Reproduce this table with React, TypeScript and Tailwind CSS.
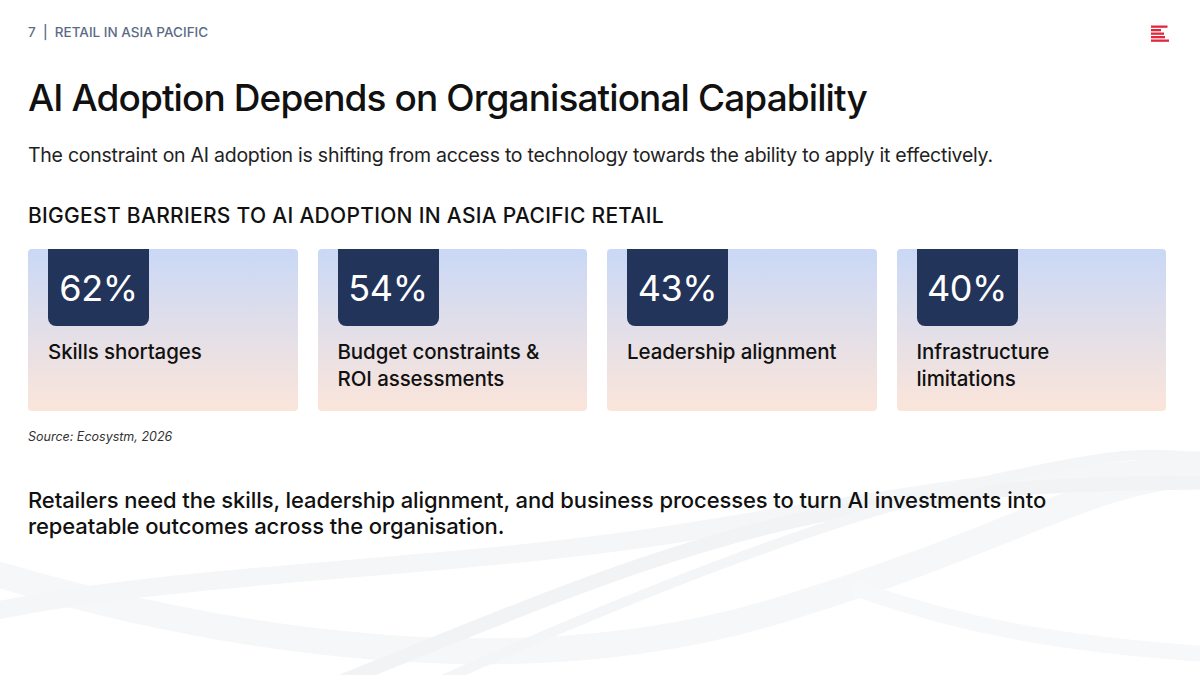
import React from "react";

const barriers = [
  { pct: "62%", label: ["Skills shortages"] },
  { pct: "54%", label: ["Budget constraints &", "ROI assessments"] },
  { pct: "43%", label: ["Leadership alignment"] },
  { pct: "40%", label: ["Infrastructure", "limitations"] },
];

const Logo = () => (
  <svg width="18" height="18" viewBox="0 0 18 18">
    <rect x="0" y="0.5" width="16.5" height="2.3" fill="#e0283c" />
    <rect x="0" y="4" width="10" height="2.3" fill="#e0283c" />
    <rect x="0" y="7.5" width="13" height="2.3" fill="#e0283c" />
    <rect x="0" y="11" width="14" height="2.3" fill="#e0283c" />
    <rect x="0" y="14.5" width="18" height="2.3" fill="#e0283c" />
  </svg>
);

// faint swooshes in the lower part of the slide
const Waves = () => (
  <svg
    className="absolute inset-0 pointer-events-none"
    width="1200"
    height="675"
    viewBox="0 0 1200 675"
  >
    <g fill="none" strokeLinecap="round">
      <path d="M0 575 C 220 640, 520 690, 780 610 S 1080 480, 1220 470" stroke="#f6f7f8" strokeWidth="26" />
      <path d="M0 610 C 200 570, 460 570, 700 530 S 1000 480, 1220 462" stroke="#f5f6f7" strokeWidth="18" />
      <path d="M320 690 C 520 610, 700 530, 880 505 S 1100 485, 1220 482" stroke="#f2f3f4" strokeWidth="14" />
      <path d="M420 690 C 620 600, 830 515, 1000 478 S 1150 460, 1220 456" stroke="#f4f5f6" strokeWidth="10" />
      <path d="M860 590 C 960 625, 1060 645, 1220 655" stroke="#f7f8f9" strokeWidth="16" />
    </g>
  </svg>
);

export default function App() {
  return (
    <div
      className="relative w-[1200px] h-[675px] overflow-hidden bg-white text-[#111]"
      style={{ fontFamily: "Inter, 'Liberation Sans', sans-serif" }}
    >
      <Waves />
      <div className="relative flex flex-col px-[28px] pt-[24px]">
        <div className="flex items-start justify-between">
          <div className="text-[13.5px] font-medium text-[#5b6b86] leading-[16px]">
            7 &nbsp;|&nbsp; RETAIL IN ASIA PACIFIC
          </div>
          <div className="mr-[3px] mt-[1px]">
            <Logo />
          </div>
        </div>

        <h1 className="mt-[33px] text-[37px] leading-[44px] font-medium tracking-[-0.9px] text-[#111]">
          AI Adoption Depends on Organisational Capability
        </h1>

        <p className="mt-[22px] text-[19.5px] leading-[26px] tracking-[-0.25px] text-[#222]">
          The constraint on AI adoption is shifting from access to technology towards the ability to apply it effectively.
        </p>

        <h2 className="mt-[35px] text-[21px] leading-[26px] font-medium tracking-[0.3px] text-[#111]">
          BIGGEST BARRIERS TO AI ADOPTION IN ASIA PACIFIC RETAIL
        </h2>

        <div className="mt-[20px] grid grid-cols-4 gap-x-[20px] w-[1138px]">
          {barriers.map((b) => (
            <div
              key={b.pct}
              className="h-[162px] rounded-[4px] bg-gradient-to-b from-[#c9d8f6] to-[#fbe5da] px-[20px]"
            >
              <div className="w-[101px] h-[77px] rounded-b-[8px] bg-[#22345a] flex items-center justify-center">
                <span className="text-white text-[36px] leading-none tracking-[-0.4px] mt-[1px]">
                  {b.pct}
                </span>
              </div>
              <div className="mt-[12px] text-[20.5px] leading-[27px] font-medium tracking-[-0.1px] text-[#111]">
                {b.label.map((l) => (
                  <div key={l}>{l}</div>
                ))}
              </div>
            </div>
          ))}
        </div>

        <div className="mt-[18px] text-[12.5px] italic text-[#333] leading-[16px]">
          Source: Ecosystm, 2026
        </div>

        <p className="mt-[42px] text-[22px] leading-[26px] font-medium tracking-[-0.1px] text-[#111]">
          Retailers need the skills, leadership alignment, and business processes to turn AI investments into
          <br />
          repeatable outcomes across the organisation.
        </p>
      </div>
    </div>
  );
}
